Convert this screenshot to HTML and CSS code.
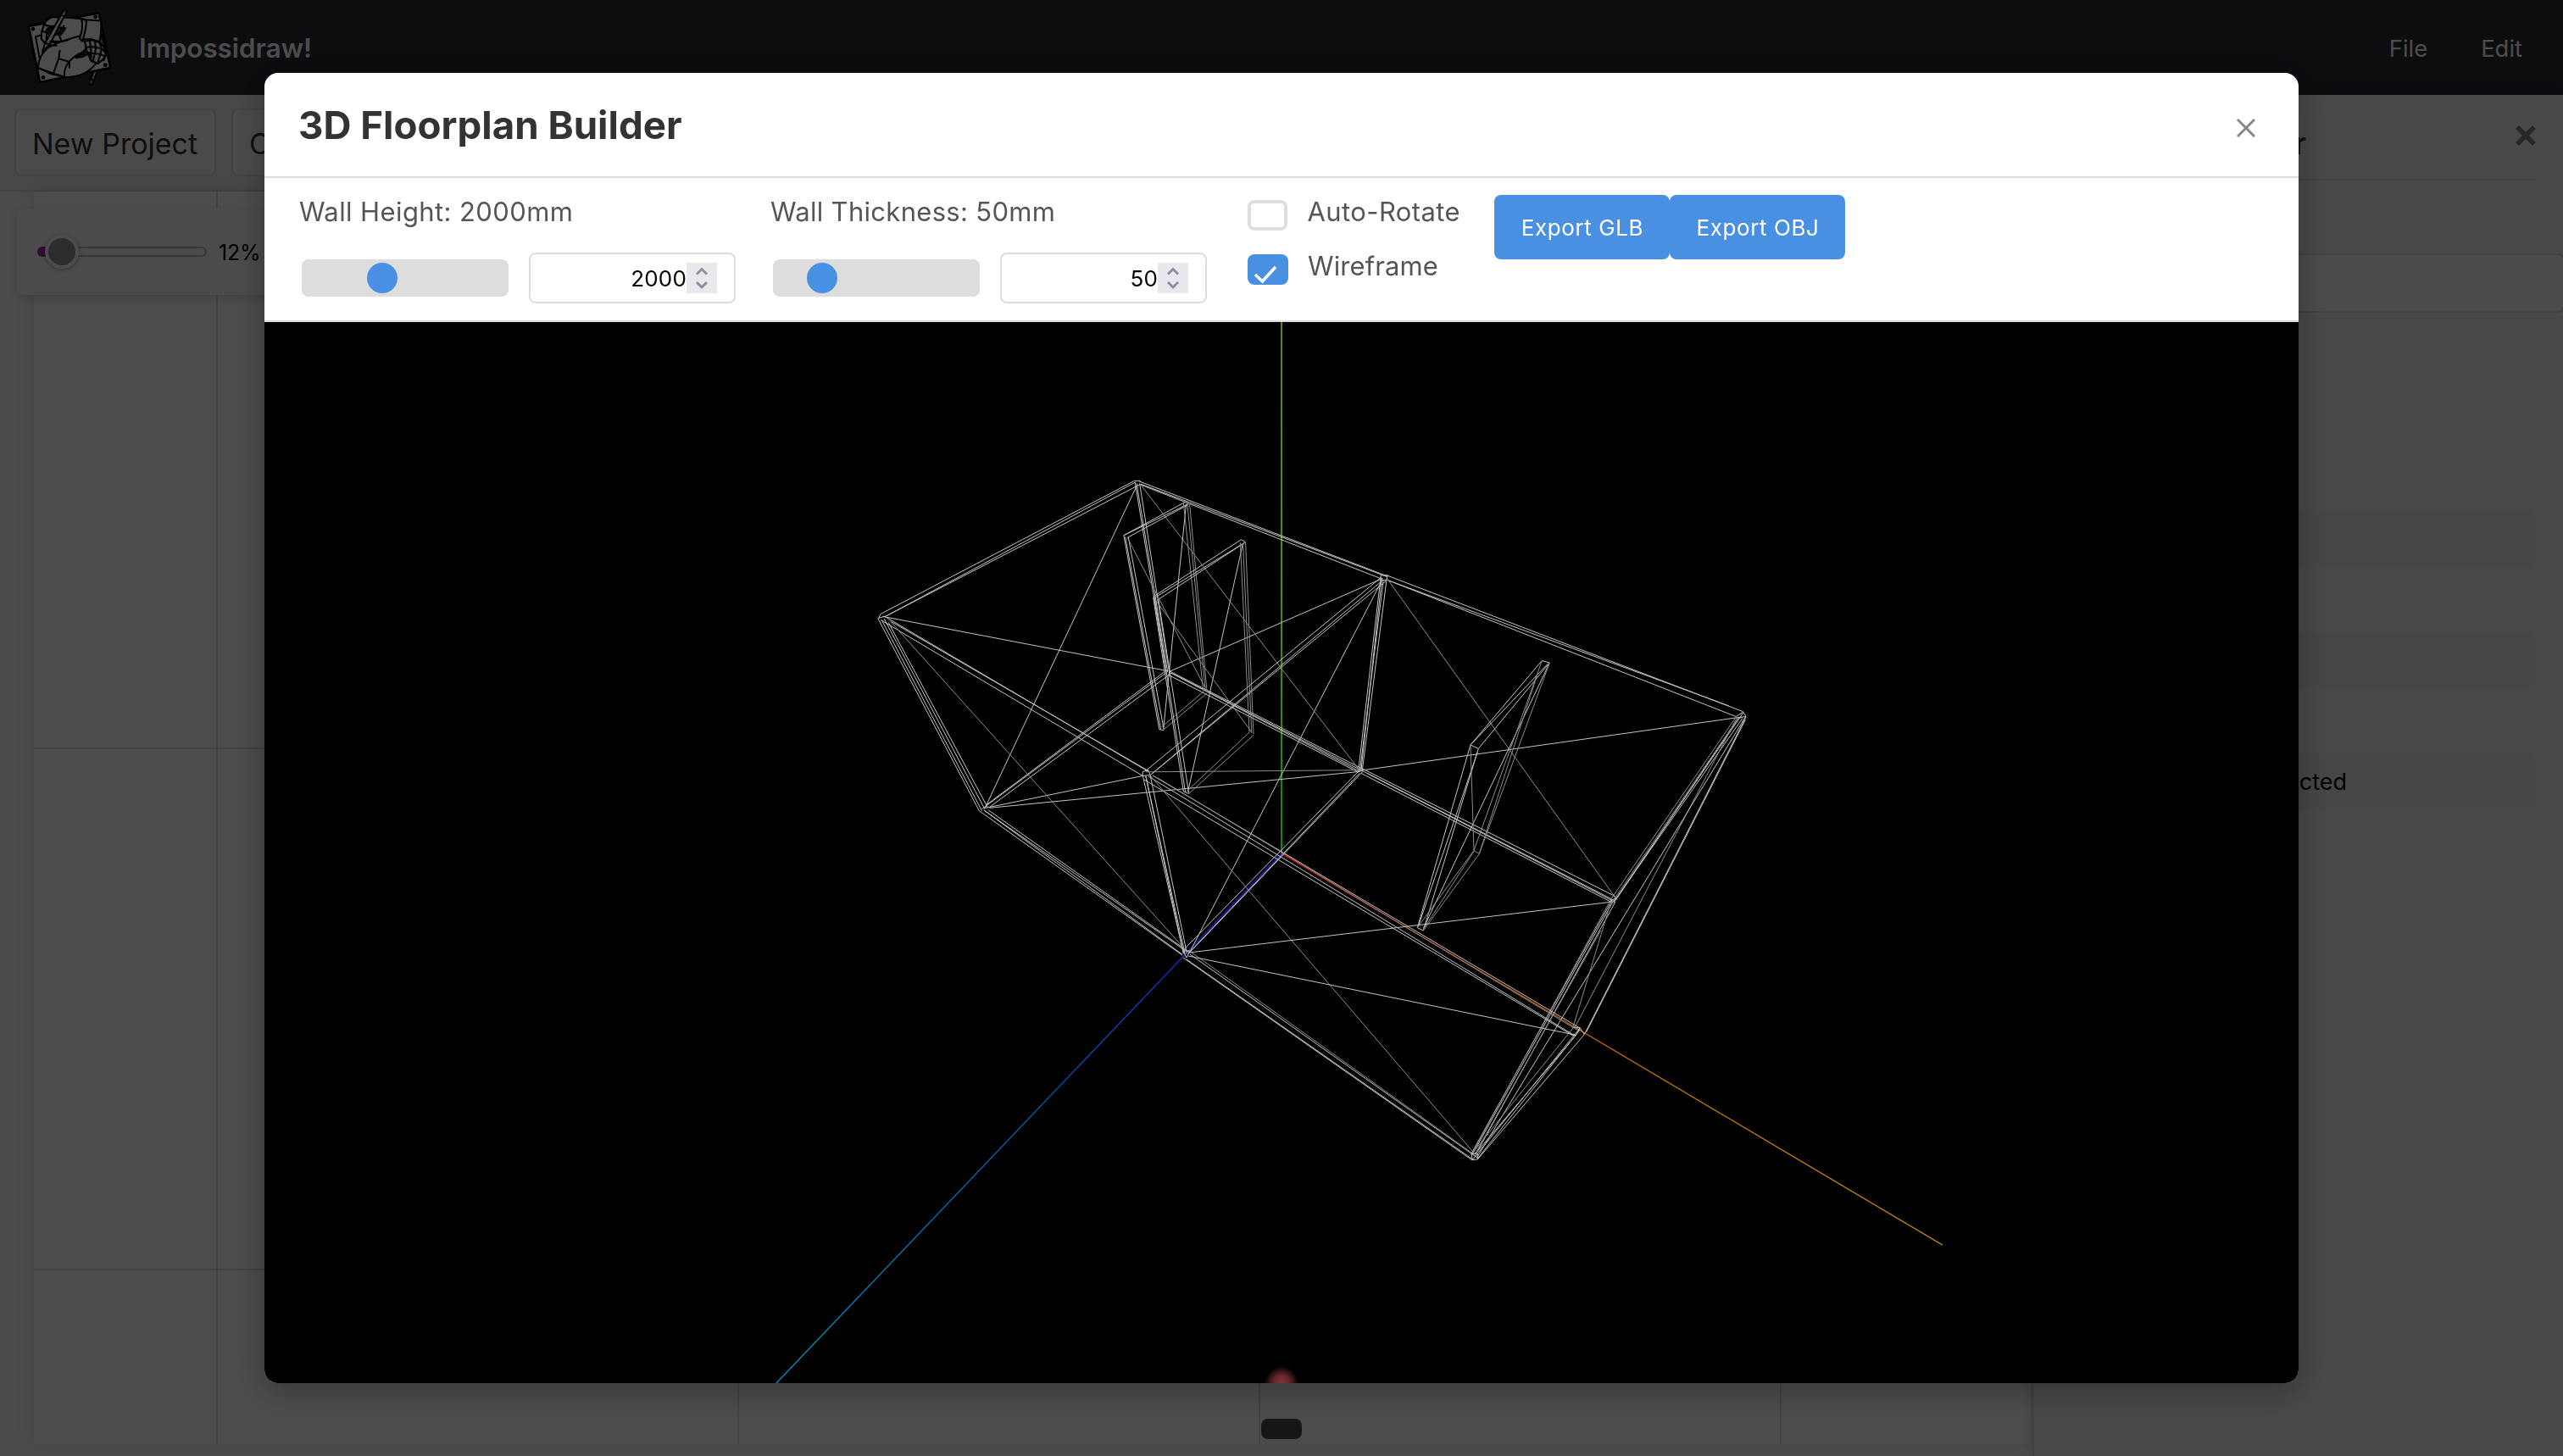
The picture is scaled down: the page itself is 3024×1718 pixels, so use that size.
FILE: index.html
```
<!DOCTYPE html>
<html lang="en">
<head>
<meta charset="utf-8">
<title>Impossidraw!</title>
<link rel="stylesheet" href="styles.css">
</head>
<body>
<div class="app">
  <header class="navbar">
    <svg class="logo" viewBox="36 30 304 280" fill="#fff" stroke="#000" stroke-width="6" stroke-linejoin="round" stroke-linecap="round">
      <path d="M257 296 L273 254 L288 246 L267 298 Q261 302 257 296Z"/>
      <path d="M44 92 L286 47 Q291 46 292 51 L331 236 Q331 241 326 242 L86 291 Q81 291 80 286 L42 98 Q41 93 44 92Z" stroke-width="8"/>
      <path d="M90 123 L66 130 L80 205 M300 120 L318 180" fill="none"/>
      <path d="M302 125 L318 190 L308 215 L290 150Z" fill="#777"/>
      <g stroke="none" fill="#000"><circle cx="57" cy="103" r="7"/><circle cx="279" cy="60" r="7"/><circle cx="314" cy="231" r="7"/><circle cx="93" cy="275" r="7"/></g>
      <path d="M75 240 C75 205 92 185 112 168 L150 150 L180 142 L222 120 L238 146 L247 150 L243 176 L208 204 L262 212 C240 240 215 268 175 275 L120 262Z"/>
      <path d="M75 242 L175 275 M152 180 L148 208 L128 264 M148 208 L181 218" fill="none"/>
      <path d="M238 70 L298 74 C300 98 300 122 292 148 L262 138 L240 140 L228 128 C236 108 238 90 238 70Z"/>
      <path d="M88 112 L98 82 Q108 66 126 60 L200 64 L238 68 C238 92 232 112 224 128 L206 132 L156 148 L128 146 L96 150 L86 138Z"/>
      <path d="M229 67 L246 72 C248 98 240 120 232 146 L222 136 C233 110 234 90 229 67Z"/>
      <path d="M104 108 Q120 86 140 96 L172 100 L158 122 L108 120Z" fill="#555"/>
      <path d="M90 110 L106 116 L104 140 M106 90 L126 94 M126 94 L112 112 M148 120 L158 146 M166 92 L150 118 L118 132 M98 84 L106 92" fill="none"/>
      <path d="M164 40 Q170 34 176 42 L116 158 L90 184 L100 152Z"/>
      <path d="M163 56 L170 60 M100 152 L114 158 M112 160 L140 162 M118 148 L140 152" fill="none"/>
      <path d="M168 274 C166 235 184 212 222 190 L246 184 L256 198 L262 216 L282 224 C252 262 214 276 168 274Z"/>
      <path d="M208 204 Q226 188 248 194 Q230 206 208 204Z" fill="#555"/>
      <path d="M186 220 L186 240 M244 184 Q228 190 214 200" fill="none"/>
      <path d="M240 148 L256 142 L276 144 L294 152 L306 164 L314 180 L314 200 L302 214 L288 226 L262 214 L264 200 L248 184 L246 168Z"/>
      <path d="M246 168 L270 166 L300 172 L312 184 M250 186 L272 190 L296 192 L312 200 M258 142 L262 168 L264 196 M276 144 L280 170 L276 192 L270 216 M294 152 L300 172 L296 194 L286 224" fill="none"/>
      <path d="M258 280 L270 284" fill="none"/>
    </svg>
    <span class="brand">Impossidraw!</span>
    <nav class="menu"><span>File</span><span>Edit</span></nav>
  </header>

  <div class="body">
    <div class="main">
      <div class="toolbar">
        <button class="tool">New Project</button>
        <button class="tool">O</button>
      </div>
      <div class="workspace">
        <div class="drawing"></div>
        <div class="zoom-panel">
          <div class="zoom-track"><span class="zoom-fill"></span><span class="zoom-thumb"></span></div>
          <span class="zoom-value">12%</span>
        </div>
        <div class="handle"></div>
      </div>
    </div>
    <aside class="sidebar">
      <div class="side-head">
        <h2>Layer</h2>
        <svg class="side-close" viewBox="0 0 24 24"><path d="M2 2 L22 22 M22 2 L2 22"/></svg>
      </div>
      <div class="side-input"></div>
      <div class="side-list">
        <div class="side-item"></div>
        <div class="side-item"></div>
        <div class="side-item"><span>Nothing selected</span></div>
      </div>
    </aside>
  </div>
</div>

<div class="overlay">
  <section class="modal">
    <header class="modal-head">
      <h1>3D Floorplan Builder</h1>
      <svg class="modal-close" viewBox="0 0 22 22"><path d="M1 1 L21 21 M21 1 L1 21"/></svg>
    </header>
    <div class="controls">
      <div class="field">
        <label>Wall Height: 2000mm</label>
        <div class="field-row">
          <div class="slider"><span class="knob" style="margin-left:77px"></span></div>
          <div class="number"><span>2000</span>
            <svg class="spin" viewBox="0 0 36 36"><path d="M12 13.5 L18 7.5 L24 13.5 M12 23 L18 29 L24 23"/></svg>
          </div>
        </div>
      </div>
      <div class="field">
        <label class="thick">Wall Thickness: 50mm</label>
        <div class="field-row">
          <div class="slider"><span class="knob" style="margin-left:40px"></span></div>
          <div class="number"><span>50</span>
            <svg class="spin" viewBox="0 0 36 36"><path d="M12 13.5 L18 7.5 L24 13.5 M12 23 L18 29 L24 23"/></svg>
          </div>
        </div>
      </div>
      <div class="checks">
        <div class="check"><span class="box"></span><label>Auto-Rotate</label></div>
        <div class="check"><span class="box on"><svg viewBox="0 0 48 36"><path d="M9 24 L17.5 32 L33 15"/></svg></span><label class="tight">Wireframe</label></div>
      </div>
      <div class="exports">
        <button>Export GLB</button><button>Export OBJ</button>
      </div>
    </div>
    <svg class="viewport" viewBox="312 380 2400 1252">
      <defs>
        <linearGradient id="ax" gradientUnits="userSpaceOnUse" x1="1512" y1="1007" x2="2292" y2="1469"><stop offset="0" stop-color="#d00000"/><stop offset=".35" stop-color="#c85000"/><stop offset=".6" stop-color="#c07800"/><stop offset="1" stop-color="#c89000"/></linearGradient>
        <linearGradient id="ay" gradientUnits="userSpaceOnUse" x1="1512" y1="1007" x2="1512" y2="380"><stop offset="0" stop-color="#009000"/><stop offset=".5" stop-color="#4a9000"/><stop offset="1" stop-color="#5e8a00"/></linearGradient>
        <linearGradient id="az" gradientUnits="userSpaceOnUse" x1="1512" y1="1007" x2="916" y2="1632"><stop offset="0" stop-color="#1010d0"/><stop offset=".45" stop-color="#0058b8"/><stop offset="1" stop-color="#0094c0"/></linearGradient>
        <radialGradient id="glow"><stop offset="0" stop-color="#8a3638"/><stop offset=".5" stop-color="#5e2527"/><stop offset="1" stop-color="#000"/></radialGradient>
      </defs>
      <g class="axis">
        <path d="M1512 1007L2292 1469" stroke="url(#ax)"/>
        <path d="M1512 1007L916 1632" stroke="url(#az)"/>
        <rect x="1511" y="380" width="2" height="627" fill="url(#ay)"/>
      </g>
      <!-- left room -->
      <g class="wire" transform="translate(1000 540) scale(.4464 .4209)">
        <path d="M88 438L758 65H774M104 443L775 74M104 443L762 68M82 450L88 438M82 450L104 443"/>
        <path d="M770 66L1426 332M775 76L1412 340M775 74L1426 334"/>
        <path d="M80 450L348 990M90 455L355 990M97 452L362 984M108 462L370 980"/>
        <path d="M355 985L846 600M365 975L838 600M375 980L856 604"/>
        <path d="M348 990L885 1395M360 988L893 1382M372 988L905 1388M360 988L885 1393"/>
        <path d="M760 70L842 600M772 72L850 600M764 72L846 600"/>
        <path d="M780 890L888 1390M788 892L892 1392M800 890L897 1390M788 892L888 1390"/>
        <path d="M788 878L1410 336M800 890L1412 346M806 885L1424 345M780 880L795 876L800 890L780 892Z"/>
        <path d="M850 598L1360 872M856 604L1354 880M846 608L1350 882M856 604L1360 878"/>
        <path d="M1350 880L888 1380M1362 880L900 1392M1354 884L905 1385"/>
        <path d="M1408 345L1350 880M1416 345L1354 880M1425 340L1360 880M1412 340L1357 880"/>
        <path d="M98 445L795 880M88 455L780 892M116 460L795 878"/>
        <path d="M766 75L362 985M92 445L846 598M1415 338L850 600M1412 345L905 1385M780 892L365 982M375 982L1354 880"/>
        <path class="far" d="M110 455L893 1380M775 76L1354 878M788 881L1354 876"/>
        <path d="M730 218L893 124M740 224L900 132M730 218L900 130M730 218L824 762M742 222L836 762M734 222L828 762M824 762L836 764M895 130L835 760"/>
        <path class="far" d="M888 128L940 652M904 128L950 656M898 130L946 655M836 762L950 660M830 755L942 655M740 225L945 645"/>
        <path d="M808 390L1040 230M818 400L1050 238M808 395L1050 238M1040 230L1052 236M808 392L888 936M822 400L902 940M812 395L893 938M888 936L902 942M1045 240L900 935"/>
        <path class="far" d="M1038 238L1062 770M1052 238L1073 775M1045 240L1068 772M896 936L1062 770M902 942L1073 778M815 400L1068 770"/>
      </g>
      <!-- right room -->
      <g class="wire" transform="translate(1600 640) scale(.3333 .4847)">
        <path d="M88 80H112L108 92H85ZM108 80L1370 412M112 92L1345 424M112 92L1320 398"/>
        <path d="M20 550L918 862M18 562L905 876M40 562L915 872M22 556L912 874"/>
        <path d="M20 555L1365 425"/>
        <path class="far" d="M112 90L918 865"/>
        <path d="M1345 424L1370 413L1380 423L1355 428M900 872L920 866L912 878"/>
        <path d="M1370 415L912 875M1355 426L918 872M1380 425L808 1198M1378 432L815 1192M1368 428L920 868"/>
        <path class="far" d="M1345 425L905 866M1350 424L775 1180M1340 440L912 870"/>
        <path d="M905 872L408 1488M918 875L430 1482M1380 423L430 1495M908 876L412 1490"/>
        <path class="far" d="M895 878L412 1486M900 880L768 1180M866 945L420 1490"/>
        <path d="M766 1180L793 1182L778 1200L762 1198M793 1182L808 1198"/>
        <path d="M793 1182L412 1503M778 1200L420 1490M808 1198L430 1502M793 1186L430 1500"/>
        <path class="far" d="M768 1182L408 1490"/>
        <path d="M408 1488L412 1503L430 1502L430 1488Z"/>
        <path d="M658 288L685 293M658 288L405 493M685 293L433 502M678 296L405 493M405 493L433 502M405 493L217 938M433 502L238 945M430 510L220 935M217 938L238 945M685 293L238 940"/>
        <path class="far" d="M405 493L417 750M658 288L417 750M685 293L436 758M640 325L436 758M417 750L436 758M417 750L217 938M436 758L238 945M417 752L240 940"/>
      </g>
      <!-- edges shared by both rooms -->
      <g class="wire">
        <path d="M1355 916L1858 1222M1350 920L1856 1222M1360 915L1864 1213"/>
        <path class="far" d="M1366 918L1862 1216M1357 915L1737 1358"/>
        <path d="M1396 1130L1737 1369M1404 1126L1743 1366M1400 1132L1739 1369"/>
        <path class="far" d="M1406 1124L1736 1360"/>
        <path d="M1403 1124L1903 1064M1402 1128L1858 1221M1396 1122H1404L1400 1130Z"/>
      </g>
      <circle cx="1512" cy="1632" r="20" fill="url(#glow)"/>
    </svg>
  </section>
</div>
</body>
</html>
```
FILE: styles.css
```
* { box-sizing: border-box; }
body { margin: 0; font-family: Inter, "Liberation Sans", sans-serif; background: #fff; overflow: hidden; }
h1, h2 { margin: 0; }
button { font-family: inherit; margin: 0; }

.app { display: flex; flex-direction: column; width: 3024px; height: 1718px; overflow: hidden; }

.navbar { flex: none; height: 112px; background: #282c34; color: #fff; display: flex; align-items: center; padding: 2px 48px 0 32px; }
.logo { width: 101px; height: 93px; margin-top: -2px; }
.brand { margin-left: 31px; font-size: 31.3px; font-weight: 600; }
.menu { margin-left: auto; display: flex; gap: 63px; font-size: 27.4px; }

.body { flex: 1; display: flex; min-height: 0; }
.main { flex: 1; display: flex; flex-direction: column; }
.toolbar { flex: none; height: 114px; background: #f0f0f0; border-bottom: 2px solid #ddd; display: flex; align-items: flex-start; gap: 18px; padding: 16px 17px; }
.tool { height: 80px; min-width: 238px; padding: 3px 19px 0; text-align: left; font-size: 34px; color: #333; background: #f9f9f9; border: 2px solid #e0e0e0; border-radius: 8px; }

.workspace { flex: 1; position: relative; background: #fafafa; padding: 0 2px 14px 40px; display: flex; }
.drawing {
  flex: 1;
  background:
    linear-gradient(90deg, #dcdcdc 2px, transparent 2px) 215px 0 / 615px 100%,
    linear-gradient(#dcdcdc 2px, transparent 2px) 0 41px / 100% 615px,
    #fff;
  box-shadow: 0 0 20px rgba(0, 0, 0, .1);
}
.zoom-panel { position: absolute; left: 20px; top: 20px; width: 420px; height: 102px; padding: 0 24px; display: flex; align-items: center; gap: 14px; background: rgba(250, 250, 250, .95); border-radius: 8px; box-shadow: 0 4px 12px rgba(0, 0, 0, .15); }
.zoom-track { position: relative; width: 200px; height: 12px; border: 2px solid #b8b8c0; border-radius: 6px; }
.zoom-fill { position: absolute; left: -2px; top: -2px; width: 20px; height: 12px; border-radius: 6px; background: #9b30a8; }
.zoom-thumb { position: absolute; left: 7px; top: -16px; width: 40px; height: 40px; border-radius: 50%; background: #97979d; border: 4px solid #fff; box-shadow: 0 1px 5px rgba(0, 0, 0, .3); }
.zoom-value { font-size: 25px; letter-spacing: -.2px; padding-top: 1px; color: #000; }
.handle { position: absolute; left: 1488px; bottom: 20px; width: 48px; height: 24px; border-radius: 8px; background: #4c4c4c; }

.sidebar { width: 626px; background: #f1f1f1; border-left: 2px solid #ddd; padding: 0 0 0 32px; overflow: hidden; box-shadow: -4px 0 12px rgba(0, 0, 0, .1); z-index: 1; }
.side-head { width: 560px; height: 101px; border-bottom: 2px solid #ddd; display: flex; justify-content: space-between; padding-top: 36px; color: #333; }
.side-head h2 { width: 289px; text-align: right; font-size: 36px; line-height: 42px; font-weight: 600; }
.side-close { width: 24px; height: 24px; fill: none; stroke: #808080; stroke-width: 5.5; }
.side-input { width: 594px; height: 70px; margin-top: 86px; background: #fafafa; border: 2px solid #ddd; border-radius: 8px; }
.side-list { width: 560px; margin-top: 234px; display: flex; flex-direction: column; gap: 77px; }
.side-item { height: 66px; border-radius: 8px; background: #ebebeb; display: flex; align-items: center; color: #000; font-size: 27px; }
.side-item span { width: 337px; text-align: right; }

.overlay { position: fixed; inset: 0; background: rgba(0, 0, 0, .7); display: flex; align-items: center; justify-content: center; z-index: 10; }
.modal { width: 2400px; height: 1546px; background: #fff; border-radius: 16px; overflow: hidden; display: flex; flex-direction: column; box-shadow: 0 8px 40px rgba(0, 0, 0, .3); }
.modal-head { flex: none; height: 124px; border-bottom: 2px solid #ddd; display: flex; align-items: center; justify-content: space-between; padding: 1px 51px 0 40px; }
.modal-head h1 { font-size: 45.7px; font-weight: 700; color: #333; }
.modal-close { width: 22px; height: 22px; margin-top: 7px; fill: none; stroke: #888; stroke-width: 3; }

.controls { flex: none; height: 170px; border-bottom: 2px solid #ddd; display: flex; align-items: flex-start; gap: 40px; padding: 20px 40px 0; color: #555; font-size: 31px; line-height: 39px; letter-spacing: .4px; }
.field { width: 516px; }
.field label { display: block; padding-left: 1px; }
.field .thick { letter-spacing: .3px; }
.field-row { margin-top: 29px; display: flex; align-items: center; gap: 24px; padding-left: 4px; }
.slider { width: 244px; height: 44px; border-radius: 8px; background: #ddd; display: flex; align-items: center; }
.knob { width: 36px; height: 36px; border-radius: 50%; background: #4a90e2; }
.number { width: 244px; height: 60px; border: 2px solid #ddd; border-radius: 8px; display: flex; align-items: center; justify-content: flex-end; padding-right: 20px; color: #000; font-size: 26px; letter-spacing: .2px; }
.spin { width: 36px; height: 36px; background: #e9e9ed; fill: none; stroke: #8f8f9d; stroke-width: 3; }

.checks { padding-left: 8px; width: 259px; }
.check { height: 64px; display: flex; align-items: flex-start; gap: 23px; white-space: nowrap; }
.check .tight { letter-spacing: .1px; }
.box { width: 48px; height: 36px; margin-top: 6px; border: 4px solid #ddd; border-radius: 8px; background: #fff; }
.box.on { border: 0; background: #4a90e2; }
.box svg { display: block; width: 48px; height: 36px; fill: none; stroke: #fff; stroke-width: 3.6; }

.exports { display: flex; }
.exports button { width: 207px; height: 76px; border: 0; border-radius: 8px; background: #4a90e2; color: #fff; font-size: 26px; letter-spacing: .6px; padding: 1px 0 0 1px; }

.viewport { flex: none; display: block; width: 2400px; height: 1252px; background: #000; }
.wire path { fill: none; stroke: #c4c4c4; stroke-width: 1; vector-effect: non-scaling-stroke; }
.wire .far { stroke: #8c8c8c; }
.axis path { fill: none; stroke-width: 1.3; }
```
